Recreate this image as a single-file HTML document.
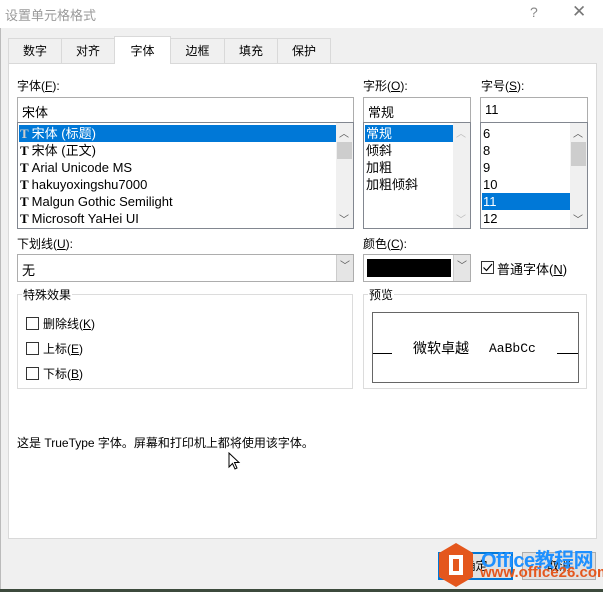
<!DOCTYPE html>
<html><head><meta charset="utf-8"><style>
*{box-sizing:border-box;margin:0;padding:0}
body{width:603px;height:592px;background:#f0f0f0;font-family:"Liberation Sans","Noto Sans CJK SC",sans-serif;font-size:12px;color:#000;position:relative;overflow:hidden}
.a{position:absolute}
.box{position:absolute;background:#fff;border:1px solid #7a7a7a}
.lbox{position:absolute;background:#fff;border:1px solid #828790}
.tab{position:absolute;top:38px;height:25px;border:1px solid #d9d9d9;border-bottom:none;background:#f0f0f0;text-align:center;line-height:24px;font-size:12px}
.item{position:absolute;left:2px;height:17px;line-height:17px;font-size:13px;white-space:nowrap}
.tt{font-family:"Liberation Serif",serif;font-weight:bold;font-size:13px;margin-right:3px}
.sb{position:absolute;top:0;right:0;width:17px;height:100%;background:#f0f0f0}
.cb{position:absolute;width:13px;height:13px;border:1px solid #333;background:#fff}
.grp{position:absolute;border:1px solid #dcdcdc}
.dd{position:absolute;right:0;top:0;width:17px;height:100%;background:#e5e5e5;border-left:1px solid #ccc;color:#555;text-align:center;font-size:10px;line-height:24px}
</style></head><body>
<div class="a" style="left:0;top:0;width:603px;height:28px;background:#fff"></div>
<div class="a" style="left:5px;top:5px;font-size:13px;color:#9a9a9a">设置单元格格式</div>
<div class="a" style="left:530px;top:4px;font-size:14px;color:#888">?</div>
<div class="a" style="left:572px;top:2px;font-size:17px;color:#777">✕</div>
<div class="a" style="left:0;top:28px;width:1px;height:564px;background:#bbb"></div>
<div class="tab" style="left:8px;width:54px">数字</div>
<div class="tab" style="left:61px;width:54px">对齐</div>
<div class="tab" style="left:170px;width:55px">边框</div>
<div class="tab" style="left:224px;width:54px">填充</div>
<div class="tab" style="left:277px;width:54px">保护</div>
<div class="a" style="left:8px;top:63px;width:589px;height:476px;background:#fff;border:1px solid #d9d9d9"></div>
<div class="tab" style="left:114px;top:36px;width:57px;height:28px;background:#fff;line-height:28px;border-color:#d9d9d9">字体</div>

<div class="a" style="left:17px;top:77px">字体(<u>F</u>):</div>
<div class="box" style="left:17px;top:97px;width:337px;height:26px;border-color:#adadad"><span class="a" style="left:4px;top:4px;font-size:13px">宋体</span></div>
<div class="lbox" style="left:17px;top:122px;width:337px;height:107px">
<div class="a" style="left:1px;top:2px;width:317px;height:17px;background:#0078d7"></div>
<div class="item" style="top:2px;color:#fff"><span class="tt" style="color:#ccc">T</span>宋体 (标题)</div>
<div class="item" style="top:19px"><span class="tt">T</span>宋体 (正文)</div>
<div class="item" style="top:36px"><span class="tt">T</span>Arial Unicode MS</div>
<div class="item" style="top:53px"><span class="tt">T</span>hakuyoxingshu7000</div>
<div class="item" style="top:70px"><span class="tt">T</span>Malgun Gothic Semilight</div>
<div class="item" style="top:87px"><span class="tt">T</span>Microsoft YaHei UI</div>
<div class="sb"><div class="a" style="left:3px;top:2px;font-size:10px;color:#555">︿</div><div class="a" style="left:1px;top:19px;width:15px;height:17px;background:#cdcdcd"></div><div class="a" style="left:3px;top:88px;font-size:10px;color:#555">﹀</div></div>
</div>

<div class="a" style="left:363px;top:77px">字形(<u>O</u>):</div>
<div class="box" style="left:363px;top:97px;width:108px;height:26px;border-color:#adadad"><span class="a" style="left:4px;top:4px;font-size:13px">常规</span></div>
<div class="lbox" style="left:363px;top:122px;width:108px;height:107px">
<div class="a" style="left:1px;top:2px;width:88px;height:17px;background:#0078d7"></div>
<div class="item" style="top:2px;color:#fff">常规</div>
<div class="item" style="top:19px">倾斜</div>
<div class="item" style="top:36px">加粗</div>
<div class="item" style="top:53px">加粗倾斜</div>
<div class="sb"><div class="a" style="left:3px;top:2px;font-size:10px;color:#bbb">︿</div><div class="a" style="left:3px;top:88px;font-size:10px;color:#bbb">﹀</div></div>
</div>

<div class="a" style="left:481px;top:77px">字号(<u>S</u>):</div>
<div class="box" style="left:480px;top:97px;width:108px;height:26px;border-color:#adadad"><span class="a" style="left:4px;top:4px;font-size:13px">11</span></div>
<div class="lbox" style="left:480px;top:122px;width:108px;height:107px">
<div class="item" style="top:2px">6</div>
<div class="item" style="top:19px">8</div>
<div class="item" style="top:36px">9</div>
<div class="item" style="top:53px">10</div>
<div class="a" style="left:1px;top:70px;width:88px;height:17px;background:#0078d7"></div>
<div class="item" style="top:70px;color:#fff">11</div>
<div class="item" style="top:87px">12</div>
<div class="sb"><div class="a" style="left:3px;top:2px;font-size:10px;color:#555">︿</div><div class="a" style="left:1px;top:19px;width:15px;height:24px;background:#cdcdcd"></div><div class="a" style="left:3px;top:88px;font-size:10px;color:#555">﹀</div></div>
</div>

<div class="a" style="left:17px;top:235px">下划线(<u>U</u>):</div>
<div class="box" style="left:17px;top:254px;width:337px;height:28px;border-color:#adadad"><span class="a" style="left:4px;top:5px;font-size:13px">无</span><div class="dd">﹀</div></div>
<div class="a" style="left:363px;top:235px">颜色(<u>C</u>):</div>
<div class="box" style="left:363px;top:254px;width:108px;height:28px;border-color:#adadad"><div class="a" style="left:3px;top:4px;width:84px;height:18px;background:#000"></div><div class="dd">﹀</div></div>
<div class="cb" style="left:481px;top:261px"></div>
<svg class="a" style="left:481px;top:261px" width="13" height="13"><path d="M2.5 6.5 L5.5 9.5 L11 3" fill="none" stroke="#000" stroke-width="1.2"/></svg>
<div class="a" style="left:497px;top:259px;font-size:13px">普通字体(<u>N</u>)</div>

<div class="grp" style="left:17px;top:294px;width:336px;height:95px"></div>
<div class="a" style="left:22px;top:286px;background:#fff;padding:0 1px">特殊效果</div>
<div class="cb" style="left:26px;top:317px"></div><div class="a" style="left:43px;top:315px">删除线(<u>K</u>)</div>
<div class="cb" style="left:26px;top:342px"></div><div class="a" style="left:43px;top:340px">上标(<u>E</u>)</div>
<div class="cb" style="left:26px;top:367px"></div><div class="a" style="left:43px;top:365px">下标(<u>B</u>)</div>

<div class="grp" style="left:363px;top:294px;width:224px;height:95px"></div>
<div class="a" style="left:368px;top:286px;background:#fff;padding:0 1px">预览</div>
<div class="a" style="left:372px;top:312px;width:207px;height:71px;border:1px solid #666;background:#fff"></div>
<div class="a" style="left:373px;top:353px;width:19px;height:1px;background:#000"></div>
<div class="a" style="left:557px;top:353px;width:21px;height:1px;background:#000"></div>
<div class="a" style="left:413px;top:338px;font-size:14px">微软卓越</div>
<div class="a" style="left:489px;top:341px;font-size:13px;font-family:'Liberation Mono',monospace">AaBbCc</div>

<div class="a" style="left:17px;top:434px">这是 TrueType 字体。屏幕和打印机上都将使用该字体。</div>
<svg class="a" style="left:228px;top:452px" width="14" height="20"><path d="M1 1 L1 15 L4.5 11.5 L7 17 L9 16 L6.5 10.5 L11 10.5 Z" fill="#fff" stroke="#000"/></svg>

<div class="a" style="left:438px;top:552px;width:75px;height:28px;border:2px solid #0078d7;background:#e1e1e1;text-align:center;line-height:24px">确定</div>
<div class="a" style="left:522px;top:552px;width:74px;height:28px;border:1px solid #adadad;background:#e1e1e1;text-align:center;line-height:26px">取消</div>
<svg class="a" style="left:438px;top:542px" width="36" height="46"><polygon points="18,1 35,11 35,35 18,45 1,35 1,11" fill="#e4571d"/><rect x="11" y="13" width="14" height="20" fill="#fff"/><rect x="15" y="17" width="6" height="12" fill="#e4571d"/></svg>
<div class="a" style="left:481px;top:544px;font-size:20px;font-weight:bold;color:#1e90ff;letter-spacing:-0.5px">Office教程网</div>
<div class="a" style="left:480px;top:564px;font-size:15px;font-weight:bold;color:#e4571d">www.office26.com</div>
<div class="a" style="left:0;top:589px;width:603px;height:3px;background:#3c4a3c"></div>
</body></html>
